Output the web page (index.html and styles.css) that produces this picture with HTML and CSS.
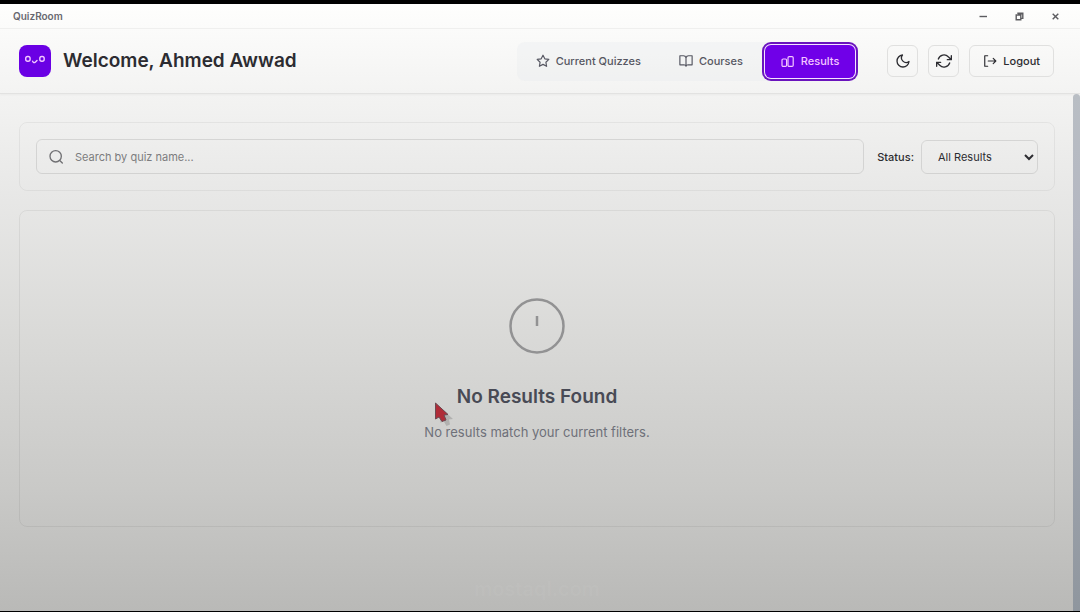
FILE: index.html
```html
<!DOCTYPE html>
<html lang="en">
<head>
<meta charset="utf-8">
<title>QuizRoom</title>
<meta name="viewport" content="width=device-width, initial-scale=1">
<link rel="stylesheet" href="styles.css">
</head>
<body>
<div class="window">
  <div class="titlebar">
    <span class="app-name">QuizRoom</span>
    <div class="window-controls">
      <button class="window-button" type="button" aria-label="Minimize"><svg width="9" height="9" viewBox="0 0 9 9"><path d="M.5 4.500h7.500"/></svg></button>
      <button class="window-button" type="button" aria-label="Restore"><svg width="9" height="9" viewBox="0 0 9 9"><path d="M1.200 3h4.600v4.800H1.200zM3 2V1.200h4.800v5.200H6.500M3 1.800h4.500"/></svg></button>
      <button class="window-button" type="button" aria-label="Close"><svg width="9" height="9" viewBox="0 0 9 9"><path d="M1.700 1.700l5.600 5.600M7.300 1.700L1.700 7.300"/></svg></button>
    </div>
  </div>

  <header class="header">
    <div class="brand">
      <svg class="logo" width="32" height="32" viewBox="0 0 32 32" aria-hidden="true">
        <rect width="32" height="32" rx="8"/>
        <g class="face"><rect x="6.700" y="11.500" width="4.400" height="4.800" rx="2"/><rect x="20.800" y="11.500" width="4.400" height="4.800" rx="2"/><path d="M13.600 16.200q1 2 2.400 1.200l2-2"/></g>
      </svg>
      <h1 class="welcome">Welcome, Ahmed Awwad</h1>
    </div>
    <nav class="tabs">
      <button class="tab" type="button">
        <svg class="icon" width="14" height="14" viewBox="0 0 24 24"><path d="M12 2l3.100 6.300 6.900 1-5 4.900 1.200 6.900-6.200-3.300-6.200 3.300L7 14.200 2 9.300l6.900-1z"/></svg>
        Current Quizzes
      </button>
      <button class="tab" type="button">
        <svg class="icon" width="14" height="14" viewBox="0 0 24 24"><path d="M1.500 3h6a4.500 4.500 0 0 1 4.500 3.500V21a4 4 0 0 0-3.500-2.500h-7zM22.500 3h-6A4.500 4.500 0 0 0 12 6.500V21a4 4 0 0 1 3.500-2.500h7z"/></svg>
        Courses
      </button>
      <button class="tab tab-active" type="button">
        <svg class="icon" width="14" height="14" viewBox="0 0 14 14"><rect x="1" y="5" width="4.600" height="7.400" rx="1.200"/><rect x="7" y="2.600" width="5.200" height="9.800" rx="1.200"/></svg>
        Results
      </button>
    </nav>
    <div class="actions">
      <button class="action action-square" type="button" aria-label="Dark mode"><svg class="icon" width="16" height="16" viewBox="0 0 24 24"><path d="M21 12.800A9 9 0 1 1 11.200 3a7 7 0 0 0 9.800 9.800z"/></svg></button>
      <button class="action action-square" type="button" aria-label="Refresh"><svg class="icon" width="16" height="16" viewBox="0 0 24 24"><path d="M23 4v6h-6M1 20v-6h6M3.500 9a9 9 0 0 1 14.900-3.400L23 10M1 14l4.600 4.400A9 9 0 0 0 20.500 15"/></svg></button>
      <button class="action" type="button"><svg class="icon" width="14" height="14" viewBox="0 0 24 24"><path d="M8 3H3v18h5M9 12h13M17.500 7.500L22 12l-4.500 4.500"/></svg>Logout</button>
    </div>
  </header>

  <div class="viewport">
    <main class="content">
      <form class="card filters">
        <label class="search">
          <svg class="icon" width="16" height="16" viewBox="0 0 24 24"><circle cx="11.500" cy="11" r="8.500"/><path d="M18 17.500l3.500 3.500"/></svg>
          <input class="search-input" type="text" placeholder="Search by quiz name..." aria-label="Search by quiz name">
        </label>
        <div class="status">
          <label class="status-label" for="status">Status:</label>
          <select class="status-select" id="status"><option>All Results</option></select>
        </div>
      </form>

      <section class="card empty">
        <svg class="empty-icon" width="56" height="56" viewBox="0 0 56 56" aria-hidden="true"><circle cx="28" cy="28" r="26.500"/><path d="M28 18v10"/></svg>
        <h2 class="empty-title">No Results Found</h2>
        <p class="empty-text">No results match your current filters.</p>
        <svg class="pointer" width="20" height="26" viewBox="0 0 20 26" aria-hidden="true"><path class="pointer-shadow" d="M6 6l13 12-4 .5 1 5-3.500 1.500-3-5-3 2z"/><path class="pointer-body" d="M1.500 2l12.500 11.500-4 .5 2 5-4 1.500-3-4.500-3.500 2z"/></svg>
      </section>
      <p class="watermark">mostaql.com</p>
    </main>
    <div class="scroll-track"></div>
  </div>
</div>
</body>
</html>
```

FILE: styles.css
```css
* {
  box-sizing: border-box;
}

body {
  margin: 0;
  font-family: Inter, "Liberation Sans", sans-serif;
  font-size: 11px;
  color: #2c2c31;
}

h1, h2, p {
  margin: 0;
}

button, input, select {
  font: inherit;
  color: inherit;
}

button {
  border: 0;
  background: none;
}

.window {
  display: flex;
  flex-direction: column;
  min-height: 100vh;
  border-top: 4px solid #000;
  border-bottom: 1px solid #000;
  background: linear-gradient(#fefefd 0, #f3f3f2 15%, #e8e8e7 31%, #dadad8 54%, #c9c9c7 80%, #b9b9b7 100%);
}

.titlebar {
  display: flex;
  align-items: center;
  justify-content: space-between;
  height: 25px;
  padding: 0 16px 0 13px;
  border-bottom: 1px solid #efefee;
}

.app-name {
  font-size: 10px;
  font-weight: 600;
  color: #686870;
}

.window-controls {
  display: flex;
  gap: 19px;
}

.window-button {
  display: flex;
  padding: 4px;
}

.window-button svg {
  fill: none;
  stroke: #5c5c60;
  stroke-width: 1.4;
}

.header {
  display: flex;
  align-items: center;
  height: 65px;
  padding: 0 19px;
  border-bottom: 1px solid #e2e2e1;
  box-shadow: 0 1px 2px rgba(0, 0, 0, 0.04);
}

.brand {
  display: flex;
  align-items: center;
  gap: 12px;
  margin-right: auto;
}

.logo {
  fill: #6a00e4;
}

.face {
  fill: none;
  stroke: #f3c8ff;
  stroke-width: 1.4;
  stroke-linecap: round;
}

.welcome {
  font-size: 19px;
  font-weight: 600;
  line-height: 24px;
}

.icon {
  flex: none;
  fill: none;
  stroke: currentColor;
  stroke-width: 2;
  stroke-linecap: round;
  stroke-linejoin: round;
}

.tabs {
  display: flex;
  gap: 6px;
  padding: 3px;
  border-radius: 8px;
  background: rgba(226, 232, 236, 0.25);
}

.tab {
  display: flex;
  align-items: center;
  gap: 6px;
  height: 33px;
  padding: 0 16px;
  border-radius: 6px;
  font-weight: 500;
  color: #565762;
}

.tab-active {
  color: #f4c8ff;
  background: #7000e8;
  box-shadow: 0 0 0 1px #f4e4ff, 0 0 0 3px #6a14bd;
}

.tab-active .icon {
  stroke-width: 1.2;
}

.actions {
  display: flex;
  gap: 10px;
  margin: 0 7px 0 29px;
}

.action {
  display: flex;
  align-items: center;
  justify-content: center;
  gap: 6px;
  height: 32px;
  padding: 0 13px;
  border: 1px solid #e0e0df;
  border-radius: 6px;
  font-weight: 500;
}

.action-square {
  width: 31px;
  padding: 0;
}

.viewport {
  display: flex;
  flex: 1;
}

.content {
  display: flex;
  flex: 1;
  flex-direction: column;
  padding: 28px 18px 10px 19px;
}

.scroll-track {
  width: 7px;
  border-radius: 4px 4px 0 0;
  background: linear-gradient(#b9bec4, #b4b7c1 25%, #8f969e);
}

.card {
  border: 1px solid rgba(0, 0, 0, 0.05);
  border-radius: 8px;
}

.filters {
  display: flex;
  align-items: center;
  gap: 13px;
  padding: 16px;
}

.search {
  display: flex;
  flex: 1;
  align-items: center;
  gap: 11px;
  height: 35px;
  padding: 0 11px;
  border: 1px solid rgba(0, 0, 0, 0.1);
  border-radius: 6px;
  color: #707073;
}

.search-input {
  flex: 1;
  min-width: 0;
  padding: 0;
  border: 0;
  outline: 0;
  background: none;
}

.search-input::placeholder {
  color: #7c7c7e;
  opacity: 1;
}

.status {
  display: flex;
  align-items: center;
  gap: 7px;
}

.status-label {
  font-weight: 500;
}

.status-select {
  width: 117px;
  height: 34px;
  padding: 0 0 0 12px;
  border: 1px solid rgba(0, 0, 0, 0.1);
  border-radius: 6px;
  background: transparent;
}

.empty {
  position: relative;
  display: flex;
  flex-direction: column;
  align-items: center;
  margin-top: 19px;
  padding: 87px 24px 84px;
  border-color: rgba(0, 0, 0, 0.06);
}

.empty-icon {
  fill: none;
  stroke: #929293;
  stroke-width: 2.5;
}

.empty-title {
  margin-top: 30px;
  font-size: 19px;
  font-weight: 600;
  line-height: 26px;
  color: #484a55;
}

.empty-text {
  margin-top: 12px;
  font-size: 13px;
  line-height: 20px;
  color: #6e7079;
}

.pointer {
  position: absolute;
  top: 190px;
  left: 40%;
}

.pointer-shadow {
  fill: rgba(0, 0, 0, 0.15);
}

.pointer-body {
  fill: #b02c38;
  stroke: #6b4a52;
  stroke-width: 1;
}

.watermark {
  margin-top: auto;
  text-align: center;
  font-size: 20px;
  line-height: 24px;
  font-weight: 600;
  color: rgba(255, 255, 255, 0.04);
}
```
